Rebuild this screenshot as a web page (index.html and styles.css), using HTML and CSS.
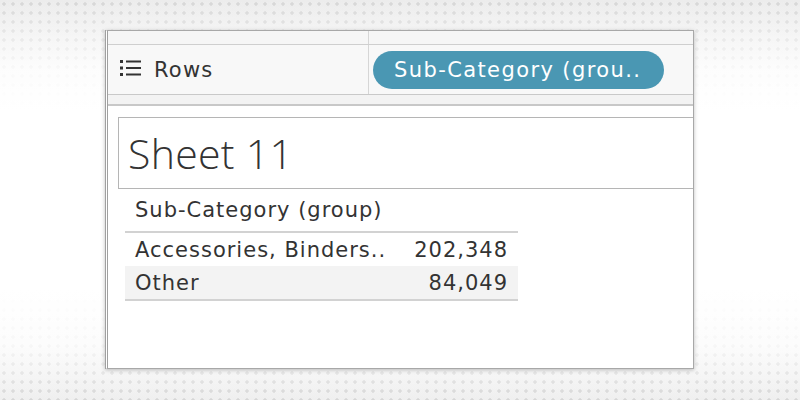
FILE: index.html
```html
<!DOCTYPE html>
<html>
<head>
<meta charset="utf-8">
<link rel="stylesheet" href="styles.css">
</head>
<body>
<div class="bg">
  <div class="window">
    <div class="topstrip">
      <div class="ts-left"></div>
      <div class="ts-right"></div>
    </div>
    <div class="shelf">
      <div class="shelf-label">
        <svg class="rows-icon" width="22" height="18" viewBox="0 0 22 18">
          <rect x="0" y="1" width="3" height="3" fill="#333"/>
          <rect x="6" y="1.5" width="15" height="2" fill="#333"/>
          <rect x="0" y="7.5" width="3" height="3" fill="#333"/>
          <rect x="6" y="8" width="15" height="2" fill="#333"/>
          <rect x="0" y="14" width="3" height="3" fill="#333"/>
          <rect x="6" y="14.5" width="15" height="2" fill="#333"/>
        </svg>
        <span class="rows-text">Rows</span>
      </div>
      <div class="shelf-pills">
        <div class="pill">Sub-Category (grou..</div>
      </div>
    </div>
    <div class="gap"></div>
    <div class="content">
      <div class="title-box"><span class="title">Sheet 11</span></div>
      <table class="crosstab">
        <thead>
          <tr><th class="hdr">Sub-Category (group)</th><th class="hdr2"></th></tr>
        </thead>
        <tbody>
          <tr><td class="name">Accessories, Binders..</td><td class="num">202,348</td></tr>
          <tr class="alt"><td class="name">Other</td><td class="num">84,049</td></tr>
        </tbody>
      </table>
    </div>
  </div>
</div>
</body>
</html>
```

FILE: styles.css
```css
* { box-sizing: border-box; }
html, body { margin: 0; padding: 0; }
body { width: 800px; height: 400px; overflow: hidden; font-family: "DejaVu Sans", "Noto Sans", sans-serif; }

.bg {
  width: 800px;
  height: 400px;
  padding: 30px 0 0 105px;
  background:
    linear-gradient(to bottom, rgba(255,255,255,0) 0px, rgba(255,255,255,0.85) 70px, #fff 110px, #fff 290px, rgba(255,255,255,0.8) 345px, rgba(255,255,255,0) 400px),
    radial-gradient(circle at 4px 4px, #d6d6d6 1.4px, rgba(0,0,0,0) 2px) 0 0 / 9px 9px,
    linear-gradient(to bottom, #ececec, #f6f6f6 50%, #efefef);
}

.window {
  width: 589px;
  height: 339px;
  background: #fff;
  border: 1px solid #a8a8a8;
  border-left: 3px double #a0a0a0;
  box-shadow: 0 1px 4px rgba(0,0,0,0.25);
  overflow: hidden;
  display: flex;
  flex-direction: column;
}

.topstrip {
  height: 14px;
  display: flex;
  background: #f6f6f6;
  border-bottom: 1px solid #cfcfcf;
  flex: none;
}
.ts-left { width: 261px; border-right: 1px solid #d6d6d6; }

.shelf {
  height: 50px;
  flex: none;
  display: flex;
  background: #f8f8f8;
  border-bottom: 1px solid #c9c9c9;
}
.shelf-label {
  width: 261px;
  border-right: 1px solid #d6d6d6;
  display: flex;
  align-items: center;
  padding-left: 12px;
}
.rows-icon { margin-right: 12px; margin-top: -3px; }
.rows-text { font-size: 21px; color: #333; letter-spacing: 1.2px; }

.shelf-pills {
  display: flex;
  align-items: center;
  padding-left: 4px;
}
.pill {
  width: 291px;
  height: 38px;
  border-radius: 19px;
  background: #4a97b3;
  color: #fff;
  font-size: 21px;
  letter-spacing: 1.4px;
  display: flex;
  align-items: center;
  padding-left: 21px;
  white-space: nowrap;
}

.gap {
  height: 11px;
  flex: none;
  background: #f3f3f3;
  border-bottom: 2px solid #c8c8c8;
}

.content {
  flex: 1;
  padding: 11px 0 0 10px;
  background: #fff;
}

.title-box {
  width: 600px;
  height: 72px;
  border: 1px solid #b5b5b5;
  padding-left: 9px;
  display: flex;
  align-items: center;
}
.title {
  font-size: 41px;
  font-weight: 300;
  color: #333;
  font-family: "Open Sans", sans-serif;
  letter-spacing: 0.3px;
}

.crosstab {
  margin-left: 7px;
  border-collapse: collapse;
  color: #333;
  font-size: 21px;
  letter-spacing: 1px;
}
.crosstab th, .crosstab td { padding: 0; white-space: nowrap; }
.crosstab th {
  height: 43px;
  border-bottom: 2px solid #d2d2d2;
}
.hdr {
  text-align: left;
  font-weight: 400;
  padding-left: 10px !important;
  vertical-align: middle;
}
.crosstab td { height: 34px; }
.name { padding-left: 10px !important; width: 280px; }
.num { text-align: right; padding-right: 10px !important; width: 113px; }
.alt td { background: #f3f3f3; }
tbody tr:last-child td { border-bottom: 2px solid #d2d2d2; }
```
